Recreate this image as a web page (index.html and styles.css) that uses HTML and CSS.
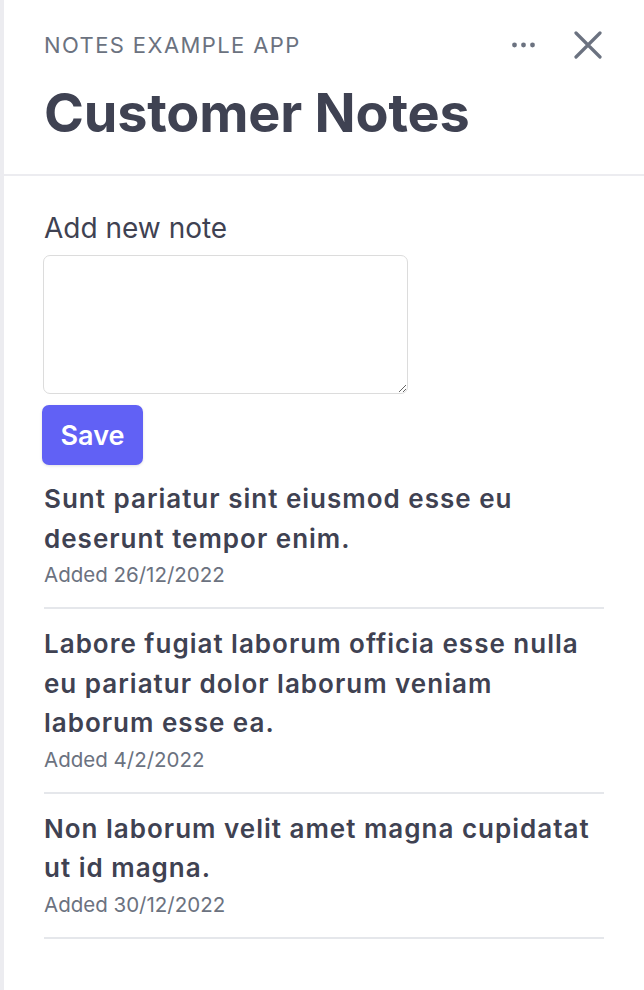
FILE: index.html
```html
<!DOCTYPE html>
<html>
<head>
<meta charset="utf-8">
<link rel="stylesheet" href="styles.css">
</head>
<body>
<div class="panel">
  <header class="header">
    <div class="header-top">
      <div class="app-name">NOTES EXAMPLE APP</div>
      <div class="actions">
        <svg class="dots" width="26" height="8" viewBox="0 0 26 8"><circle cx="3.5" cy="4" r="2.4"/><circle cx="12.5" cy="4" r="2.4"/><circle cx="21.5" cy="4" r="2.4"/></svg>
        <svg class="close" width="28" height="28" viewBox="0 0 28 28"><path d="M2 2 L26 26 M26 2 L2 26"/></svg>
      </div>
    </div>
    <h1 class="title">Customer Notes</h1>
  </header>
  <main class="content">
    <label class="label" for="note">Add new note</label>
    <textarea id="note" class="textarea"></textarea>
    <button class="save">Save</button>
    <ul class="notes">
      <li class="note">
        <p class="note-text">Sunt pariatur sint eiusmod esse eu deserunt tempor enim.</p>
        <p class="note-date">Added 26/12/2022</p>
      </li>
      <li class="note">
        <p class="note-text">Labore fugiat laborum officia esse nulla eu pariatur dolor laborum veniam laborum esse ea.</p>
        <p class="note-date">Added 4/2/2022</p>
      </li>
      <li class="note">
        <p class="note-text">Non laborum velit amet magna cupidatat ut id magna.</p>
        <p class="note-date">Added 30/12/2022</p>
      </li>
    </ul>
  </main>
</div>
</body>
</html>
```
FILE: styles.css
```css
html, body {
  margin: 0;
  padding: 0;
  background: #ffffff;
}
body {
  font-family: Inter, "Noto Sans", sans-serif;
  color: #3f4252;
}
.panel {
  border-left: 4px solid #ececf0;
  min-height: 990px;
  box-sizing: border-box;
}
.header {
  padding: 31px 40px 0 40px;
  border-bottom: 2px solid #ececf0;
  height: 176px;
  box-sizing: border-box;
}
.header-top {
  display: flex;
  align-items: center;
  justify-content: space-between;
  height: 28px;
}
.app-name {
  font-size: 22px;
  line-height: 28px;
  color: #6b7280;
  letter-spacing: 1.4px;
}
.actions {
  display: flex;
  align-items: center;
  gap: 37px;
  margin-right: 2px;
}
.dots {
  fill: #6b7280;
  display: block;
}
.close {
  display: block;
  fill: none;
  stroke: #6b7280;
  stroke-width: 3.2;
  stroke-linecap: round;
}
.title {
  margin: 22px 0 0 0;
  font-size: 54px;
  line-height: 64px;
  font-weight: 700;
  color: #3f4252;
  letter-spacing: -0.2px;
}
.content {
  padding: 35px 40px 0 40px;
  display: flex;
  flex-direction: column;
  align-items: flex-start;
}
.label {
  font-size: 28px;
  line-height: 34px;
  color: #3f4252;
}
.textarea {
  margin-top: 10px;
  margin-left: -1px;
  width: 365px;
  height: 139px;
  box-sizing: border-box;
  border: 1.5px solid #dcdcdc;
  border-radius: 7px;
  font-family: inherit;
  resize: both;
}
.save {
  margin-top: 11px;
  margin-left: -2px;
  width: 101px;
  height: 60px;
  border: none;
  border-radius: 7px;
  background: #6161f5;
  color: #ffffff;
  font-family: inherit;
  font-size: 27px;
  font-weight: 600;
  box-shadow: 0 1px 3px rgba(0,0,0,0.12);
}
.notes {
  list-style: none;
  margin: 14px 0 0 0;
  padding: 0;
  width: 100%;
}
.note {
  border-bottom: 2px solid #e5e7eb;
  padding: 0 0 15px 0;
  margin-bottom: 15px;
}
.note-text {
  margin: 0;
  font-size: 26px;
  line-height: 39.5px;
  font-weight: 600;
  letter-spacing: 1px;
  color: #3f4252;
}
.note-date {
  margin: 0;
  font-size: 20.5px;
  line-height: 34px;
  color: #6b7280;
}
```
